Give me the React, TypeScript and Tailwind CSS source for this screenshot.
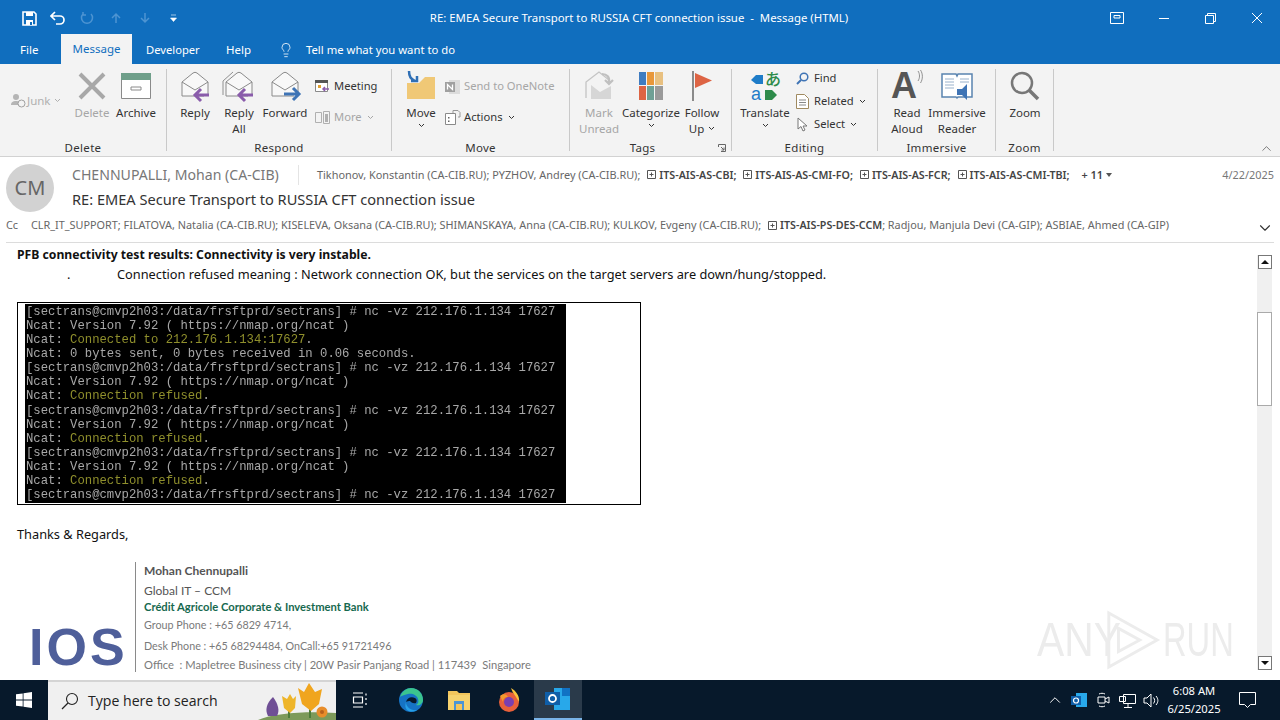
import React from "react";
import { ChevronDown, ChevronUp, Lightbulb } from "lucide-react";

function Caret({ className = "" }: { className?: string }) {
  return (
    <svg width="7" height="5" viewBox="0 0 7 5" className={className}>
      <path d="M1 1l2.5 2.5L6 1" fill="none" stroke="currentColor" strokeWidth="1" />
    </svg>
  );
}

function Big({ w, icon, lines, dim, caret }: { w: number; icon: React.ReactNode; lines: string[]; dim?: boolean; caret?: "below" | "inline" }) {
  return (
    <div style={{ width: w }} className={`flex flex-col items-center shrink-0 leading-[15.5px] ${dim ? "text-[#a6a6a6]" : "text-[#333]"}`}>
      <div className="h-[38px] flex items-center justify-center">{icon}</div>
      {lines.map((l, i) => (
        <div key={l} className="whitespace-nowrap flex items-center gap-[4px]">
          {l}
          {caret === "inline" && i === lines.length - 1 && <Caret />}
        </div>
      ))}
      {caret === "below" && <Caret className="mt-[2px]" />}
    </div>
  );
}

function Small({ icon, label, dim, caret }: { icon: React.ReactNode; label: string; dim?: boolean; caret?: boolean }) {
  return (
    <div className={`h-[23px] flex items-center gap-[3px] whitespace-nowrap text-[11.2px] ${dim ? "text-[#a6a6a6]" : "text-[#333]"}`}>
      <span className="w-[17px] flex justify-center">{icon}</span>
      {label}
      {caret && <Caret className="ml-[2px]" />}
    </div>
  );
}

function Group({ w, label, pl, children, launcher }: { w: number; label: string; pl: number; children: React.ReactNode; launcher?: boolean }) {
  return (
    <div style={{ width: w }} className="relative flex flex-col h-full shrink-0">
      <div style={{ paddingLeft: pl }} className="flex h-[76px] pt-[3px]">{children}</div>
      <div className={`text-center text-[11.5px] text-[#333] leading-[16px] tracking-[0.3px] ${launcher ? "pr-[16px]" : ""}`}>{label}</div>
      {launcher && (
        <svg width="8" height="8" viewBox="0 0 8 8" className="absolute right-[5px] bottom-[4px] text-[#666]">
          <path d="M.5 3V.5h7v7H3M3 3l3 3M6 3.5V6H3.5" fill="none" stroke="currentColor" />
        </svg>
      )}
    </div>
  );
}

function Sep() {
  return <div className="w-px h-[82px] mt-[5px] bg-[#c9c9c9] shrink-0" />;
}

function Envelope({ arrow, extra }: { arrow: string; extra?: boolean }) {
  const right = arrow === "#3f74b5";
  return (
    <svg width="34" height="34" viewBox="0 0 34 34">
      {extra && <path d="M1 26V12L11 3" fill="none" stroke="#909090" />}
      <path d="M4 27V13L15 4q2-1.500 4 0l11 9v14" fill="#f8f8f8" stroke="#8a8a8a" />
      <path d="M4 13l13 8 13-8" fill="none" stroke="#8a8a8a" />
      <path d="M4 27h22" stroke="#8a8a8a" />
      {right ? (
        <path d="M16 25h14M25 19l6 6-6 6" fill="none" stroke={arrow} strokeWidth="3" />
      ) : (
        <path d="M31 26H17M23 20l-6 6 6 6" fill="none" stroke={arrow} strokeWidth="3" />
      )}
    </svg>
  );
}

const terminal: [string, string, string][] = [
  ["[sectrans@cmvp2h03:/data/frsftprd/sectrans] # nc -vz 212.176.1.134 17627", "", ""],
  ["Ncat: Version 7.92 ( https://nmap.org/ncat )", "", ""],
  ["Ncat: ", "Connected to 212.176.1.134:17627", "."],
  ["Ncat: 0 bytes sent, 0 bytes received in 0.06 seconds.", "", ""],
  ["[sectrans@cmvp2h03:/data/frsftprd/sectrans] # nc -vz 212.176.1.134 17627", "", ""],
  ["Ncat: Version 7.92 ( https://nmap.org/ncat )", "", ""],
  ["Ncat: ", "Connection refused", "."],
  ["[sectrans@cmvp2h03:/data/frsftprd/sectrans] # nc -vz 212.176.1.134 17627", "", ""],
  ["Ncat: Version 7.92 ( https://nmap.org/ncat )", "", ""],
  ["Ncat: ", "Connection refused", "."],
  ["[sectrans@cmvp2h03:/data/frsftprd/sectrans] # nc -vz 212.176.1.134 17627", "", ""],
  ["Ncat: Version 7.92 ( https://nmap.org/ncat )", "", ""],
  ["Ncat: ", "Connection refused", "."],
  ["[sectrans@cmvp2h03:/data/frsftprd/sectrans] # nc -vz 212.176.1.134 17627", "", ""],
];

function Dl({ children }: { children: React.ReactNode }) {
  return (
    <span className="inline-flex items-center ml-[7px]">
      <svg width="9" height="9" viewBox="0 0 9 9" className="mr-[3px]">
        <path d="M.5.5h8v8h-8zM2.500 4.500h4M4.500 2.500v4" fill="none" stroke="#555" />
      </svg>
      <b className="font-semibold text-[#444] text-[10.7px]">{children}</b>
    </span>
  );
}

export default function App() {
  return (
    <div className="w-[1280px] h-[720px] overflow-hidden flex flex-col bg-white font-['Noto_Sans',sans-serif] text-[11.5px] relative">
      {/* title bar */}
      <div className="h-[36px] bg-[#106ebe] flex items-center text-white shrink-0">
        <div className="flex items-center pl-[22px] w-[400px]">
          <svg width="15" height="15" viewBox="0 0 15 15">
            <path d="M1 1h11l2 2v11H1z" fill="none" stroke="#fff" strokeWidth="1.6" />
            <path d="M4 1h7v4H4zM4 9h7v5H4z" fill="#fff" />
            <path d="M8 11h2v3H8z" fill="#106ebe" />
          </svg>
          <svg width="16" height="15" viewBox="0 0 16 15" className="ml-[13px]">
            <path d="M5 1L1 5l4 4M1 5h9a4 4 0 0 1 0 8H6" fill="none" stroke="#fff" strokeWidth="1.7" />
          </svg>
          <svg width="14" height="14" viewBox="0 0 14 14" className="ml-[14px]">
            <path d="M3 3a5.5 5.5 0 1 0 8 0M3 1v3h3" fill="none" stroke="#4d94d2" strokeWidth="1.5" />
          </svg>
          <svg width="12" height="12" viewBox="0 0 12 12" className="ml-[16px]">
            <path d="M6 11V2M2 6l4-4 4 4" fill="none" stroke="#4d94d2" strokeWidth="1.5" />
          </svg>
          <svg width="12" height="12" viewBox="0 0 12 12" className="ml-[17px]">
            <path d="M6 1v9M2 6l4 4 4-4" fill="none" stroke="#4d94d2" strokeWidth="1.5" />
          </svg>
          <svg width="7" height="8" viewBox="0 0 7 8" className="ml-[19px]">
            <path d="M1 1h5M0.5 4h6L3.500 7.500z" fill="#fff" stroke="#fff" strokeWidth="0.6" />
          </svg>
        </div>
        <div className="w-[478px] text-center text-[11.4px] text-white whitespace-nowrap">RE: EMEA Secure Transport to RUSSIA CFT connection issue&nbsp; -&nbsp; Message (HTML)</div>
        <div className="flex-1 flex items-center justify-end">
          <svg width="14" height="12" viewBox="0 0 14 12" className="mr-[35px]">
            <path d="M.5.5h13v11H.5z" fill="none" stroke="#fff" />
            <path d="M4 3.500h6V6H4z" fill="none" stroke="#fff" />
          </svg>
          <svg width="10" height="1" viewBox="0 0 10 1" className="mr-[36px]">
            <path d="M0 .5h10" stroke="#fff" />
          </svg>
          <svg width="11" height="11" viewBox="0 0 11 11" className="mr-[36px]">
            <path d="M.5 2.500h8v8h-8zM2.500 2.500v-2h8v8h-2" fill="none" stroke="#fff" />
          </svg>
          <svg width="10" height="10" viewBox="0 0 10 10" className="mr-[18px]">
            <path d="M0 0l10 10M10 0L0 10" stroke="#fff" />
          </svg>
        </div>
      </div>

      {/* tabs */}
      <div className="h-[28px] bg-[#106ebe] flex items-end text-white shrink-0 relative">
        <div className="w-[61px] h-[28px] pl-[20px] flex items-center">File</div>
        <div className="w-[71px] h-[30px] -mt-[2px] bg-[#f3f3f3] text-[#106ebe] flex items-center justify-center">Message</div>
        <div className="w-[81px] pl-[14px] h-[28px] flex items-center text-[11.2px]">Developer</div>
        <div className="w-[65px] pl-[13px] h-[28px] flex items-center">Help</div>
        <div className="h-[28px] flex items-center gap-[12px]">
          <Lightbulb size={16} strokeWidth={1.2} />
          <span className="text-[11.3px]">Tell me what you want to do</span>
        </div>
      </div>

      {/* ribbon */}
      <div className="h-[93px] bg-[#f3f3f3] border-b border-[#d2d2d2] flex shrink-0 relative">
        <Group w={166} label="Delete" pl={11}>
          <div className="w-[63px] pt-[25px]">
            <div className="flex items-center text-[#b0b0b0]">
              <svg width="15" height="15" viewBox="0 0 15 15">
                <circle cx="5" cy="4" r="3" fill="#b5b5b5" />
                <path d="M0 12c0-3 2-4 5-4s4 1 4 4z" fill="#b5b5b5" />
                <circle cx="10.500" cy="10.500" r="3.500" fill="#f3f3f3" stroke="#a0a0a0" />
              </svg>
              <span className="ml-[1px]">Junk</span>
              <Caret className="ml-[3px]" />
            </div>
          </div>
          <Big w={36} dim lines={["Delete"]} icon={
            <svg width="30" height="30" viewBox="0 0 30 30"><path d="M3 3l24 24M27 3L3 27" stroke="#a8a8a8" strokeWidth="4" /></svg>
          } />
          <Big w={52} lines={["Archive"]} icon={
            <svg width="30" height="26" viewBox="0 0 30 26">
              <path d="M.500 6.500h29v19H.500z" fill="#fff" stroke="#8a8a8a" />
              <path d="M0 0h30v7H0z" fill="#6f9f8a" />
              <path d="M10 14h10v3H10z" fill="none" stroke="#8a8a8a" />
            </svg>
          } />
        </Group>
        <Sep />
        <Group w={224} label="Respond" pl={6}>
          <Big w={44} lines={["Reply"]} icon={<Envelope arrow="#8a5cab" />} />
          <Big w={44} lines={["Reply", "All"]} icon={<Envelope arrow="#8a5cab" extra />} />
          <Big w={48} lines={["Forward"]} icon={<Envelope arrow="#3f74b5" />} />
          <div className="ml-[5px] pt-[8px] flex flex-col gap-[8px]">
            <Small label="Meeting" icon={
              <svg width="15" height="15" viewBox="0 0 15 15">
                <path d="M.500 2.500h12v10H.500z" fill="#fff" stroke="#8a8a8a" />
                <path d="M0 1h13v3H0z" fill="#555" />
                <path d="M3 6h3v3H3z" fill="#e0a030" />
                <path d="M14 10H8M10 8l-2 2 2 2" fill="none" stroke="#8a5cab" strokeWidth="1.500" />
              </svg>
            } />
            <Small dim caret label="More" icon={
              <svg width="16" height="14" viewBox="0 0 16 14">
                <path d="M.500 1.500h6v10h-6zM8.500.500h6v12h-6z" fill="none" stroke="#b0b0b0" />
                <path d="M10 3h3v8h-3z" fill="#b0b0b0" />
              </svg>
            } />
          </div>
        </Group>
        <Sep />
        <Group w={177} label="Move" pl={6}>
          <Big w={46} caret="below" lines={["Move"]} icon={
            <svg width="32" height="30" viewBox="0 0 32 30">
              <path d="M2 28V12h12l6-6h10v22z" fill="#f0c876" />
              <path d="M4 0c0 6 2 8 6 10M6 10h6V5" fill="none" stroke="#2f6fb5" strokeWidth="2.500" />
            </svg>
          } />
          <div className="ml-[0px] pt-[8px] flex flex-col gap-[8px]">
            <Small dim label="Send to OneNote" icon={
              <svg width="16" height="16" viewBox="0 0 16 16">
                <path d="M4 1h11v14H4z" fill="#dcdcdc" />
                <path d="M0 3h10v10H0z" fill="#a0a0a0" />
                <path d="M2.500 10.500v-5l5 5v-5" fill="none" stroke="#fff" strokeWidth="1.300" />
              </svg>
            } />
            <Small caret label="Actions" icon={
              <svg width="16" height="15" viewBox="0 0 16 15">
                <path d="M.500 3.500h10v11h-10z" fill="#fff" stroke="#8a8a8a" />
                <path d="M3 7h1.500v1.500H3zM3 10.500h1.500V12H3z" fill="#666" />
                <path d="M8 3V.5h5l2 2V7h-2" fill="none" stroke="#999" />
              </svg>
            } />
          </div>
        </Group>
        <Sep />
        <Group w={161} label="Tags" pl={4} launcher>
          <Big w={50} dim lines={["Mark", "Unread"]} icon={
            <svg width="30" height="30" viewBox="0 0 30 30">
              <path d="M2 27V11L15 1l10 8" fill="none" stroke="#c4c4c4" strokeWidth="1.300" />
              <path d="M7 14l9 7 11-6v13H7z" fill="#d6d6d6" />
              <path d="M18 3c5 0 8 3 7 9M21 9l4 4 4-4" fill="none" stroke="#c0c0c0" strokeWidth="2.200" />
            </svg>
          } />
          <Big w={54} caret="below" lines={["Categorize"]} icon={
            <svg width="24" height="28" viewBox="0 0 24 28">
              <path d="M0 0h7v13H0z" fill="#3f7cc0" />
              <path d="M8 0h7v13H8z" fill="#e8973a" />
              <path d="M16 0h8v13h-8z" fill="#e8c080" />
              <path d="M0 14h7v14H0z" fill="#dd6444" />
              <path d="M8 14h7v14H8z" fill="#6fa095" />
              <path d="M16 14h8v14h-8z" fill="#9a9a9a" />
            </svg>
          } />
          <Big w={48} caret="inline" lines={["Follow", "Up"]} icon={
            <svg width="22" height="30" viewBox="0 0 22 30">
              <path d="M2 0v30" stroke="#8a8a8a" strokeWidth="2" />
              <path d="M4 2l17 7.500L4 17z" fill="#dd6444" />
            </svg>
          } />
        </Group>
        <Sep />
        <Group w={145} label="Editing" pl={9}>
          <Big w={48} caret="below" lines={["Translate"]} icon={
            <div className="w-[28px] h-[30px] leading-[15px] text-[16px] grid grid-cols-2 font-['Noto_Sans_CJK_JP',sans-serif]">
              <svg width="12" height="12" viewBox="0 0 12 12" className="mt-[3px]"><path d="M12 1v9H5L0 6l5-5z" fill="#1e7cc8" /></svg>
              <span className="text-[#2e8b4a] font-medium">あ</span>
              <span className="text-[#1e7cc8] font-['Liberation_Sans',sans-serif] text-[18px] leading-[14px]">a</span>
              <svg width="12" height="12" viewBox="0 0 12 12" className="mt-[2px]"><path d="M0 1h7l5 5-5 5H0z" fill="#2e8b4a" /></svg>
            </div>
          } />
          <div className="ml-[5px]">
            <Small label="Find" icon={
              <svg width="13" height="13" viewBox="0 0 13 13"><circle cx="8" cy="5" r="3.800" fill="none" stroke="#3f74b5" strokeWidth="1.500" /><path d="M5 8l-4 4" stroke="#3f74b5" strokeWidth="2" /></svg>
            } />
            <Small caret label="Related" icon={
              <svg width="13" height="15" viewBox="0 0 13 15"><path d="M.500.500h8l4 4v10H.500z" fill="#fff" stroke="#a08a60" /><path d="M3 6h7M3 8.500h7M3 11h7" stroke="#888" /></svg>
            } />
            <Small caret label="Select" icon={
              <svg width="11" height="15" viewBox="0 0 11 15"><path d="M1 1v11l3-2.500L6 14l2-1-2-4h4z" fill="#fff" stroke="#777" /></svg>
            } />
          </div>
        </Group>
        <Sep />
        <Group w={117} label="Immersive" pl={7}>
          <Big w={44} lines={["Read", "Aloud"]} icon={
            <div className="flex items-start">
              <span className="font-['Liberation_Sans',sans-serif] font-bold text-[#555] text-[36px] leading-[32px]">A</span>
              <svg width="6" height="13" viewBox="0 0 6 13"><path d="M1 1c2 3 2 7 0 10M3.500 0c2.500 4 2.500 9 0 13" fill="none" stroke="#777" strokeWidth=".8" /></svg>
            </div>
          } />
          <Big w={56} lines={["Immersive", "Reader"]} icon={
            <svg width="32" height="30" viewBox="0 0 32 30">
              <path d="M1 3h14l1 2 1-2h14v23H17l-1 1-1-1H1z" fill="#fff" stroke="#5a84b0" strokeWidth="1.500" />
              <path d="M4 8h9M4 11h9M4 14h9M4 17h9M19 8h9M19 11h9" stroke="#9ab2cc" />
              <path d="M16 18h5l5-5v16l-5-5h-5z" fill="#3f74b5" />
            </svg>
          } />
        </Group>
        <Sep />
        <Group w={57} label="Zoom" pl={8}>
          <Big w={42} lines={["Zoom"]} icon={
            <svg width="30" height="30" viewBox="0 0 30 30"><circle cx="12" cy="12" r="10" fill="none" stroke="#777" strokeWidth="2.500" /><path d="M19 19l9 9" stroke="#777" strokeWidth="3.500" /></svg>
          } />
        </Group>
        <Sep />
        <ChevronUp size={15} strokeWidth={1} className="absolute right-[6px] bottom-[0px] text-[#333]" />
      </div>

      {/* message header */}
      <div className="h-[86px] mx-[6px] border-b border-[#dcdcdc] shrink-0 flex relative">
        <div className="w-[48px] h-[48px] mt-[7px] rounded-full bg-[#d2d2d2] text-[#666] text-[20px] flex items-center justify-center shrink-0">CM</div>
        <div className="flex-1 pl-[18px] min-w-0">
          <div className="h-[36px] flex items-center text-[#777]">
            <span className="text-[14.1px] w-[226px] whitespace-nowrap">CHENNUPALLI, Mohan (CA-CIB)</span>
            <span className="w-px h-[20px] bg-[#e4e4e4] mr-[18px]" />
            <span className="text-[10.9px] text-[#666] whitespace-nowrap flex-1 flex items-center">
              Tikhonov, Konstantin (CA-CIB.RU); PYZHOV, Andrey (CA-CIB.RU);
              <Dl>ITS-AIS-AS-CBI;</Dl>
              <Dl>ITS-AIS-AS-CMI-FO;</Dl>
              <Dl>ITS-AIS-AS-FCR;</Dl>
              <Dl>ITS-AIS-AS-CMI-TBI;</Dl>
              <b className="font-semibold text-[#444] ml-[12px]">+ 11</b>
              <svg width="6" height="4" viewBox="0 0 6 4" className="ml-[3px]"><path d="M0 0h6L3 4z" fill="#555" /></svg>
            </span>
            <span className="text-[10.9px] text-[#777]">4/22/2025</span>
          </div>
          <div className="h-[24px] -mt-[5px] flex items-center text-[14.6px] text-[#333] whitespace-nowrap">RE: EMEA Secure Transport to RUSSIA CFT connection issue</div>
        </div>
        <div className="absolute left-0 right-0 top-[60px] h-[16px] flex items-center text-[10.85px] text-[#666] whitespace-nowrap">
          <span className="w-[25px]">Cc</span>
          <span>CLR_IT_SUPPORT; FILATOVA, Natalia (CA-CIB.RU); KISELEVA, Oksana (CA-CIB.RU); SHIMANSKAYA, Anna (CA-CIB.RU); KULKOV, Evgeny (CA-CIB.RU);</span>
          <Dl>ITS-AIS-PS-DES-CCM</Dl>
          <span>; Radjou, Manjula Devi (CA-GIP); ASBIAE, Ahmed (CA-GIP)</span>
          <ChevronDown size={18} strokeWidth={1.500} className="absolute right-0 top-[2px] text-[#333]" />
        </div>
      </div>

      {/* body + scrollbar */}
      <div className="flex-1 min-h-0 flex relative">
        <div className="flex-1 min-w-0 pl-[17px] overflow-hidden text-[#111]">
          <div className="h-[15px] mt-[6px] overflow-hidden flex items-end">
            <div className="font-bold text-[12.2px] leading-[18px] whitespace-nowrap">PFB connectivity test results: Connectivity is very instable.</div>
          </div>
          <div className="flex h-[19px] mt-[1px] items-center text-[12.77px] whitespace-nowrap">
            <span className="w-[100px] pl-[50px]">.</span>
            <span>Connection refused meaning : Network connection OK, but the services on the target servers are down/hung/stopped.</span>
          </div>
          <div className="w-[624px] h-[203px] mt-[18px] border border-black pt-[1px] pl-[7px]">
            <div className="w-[541px] h-[199px] bg-black pl-[1px] pt-[1px] overflow-hidden font-['Liberation_Mono',monospace] text-[12.26px] leading-[14.08px] text-[#a8a8a8] whitespace-pre">
              <div className="blur-[0.3px]">
                {terminal.map((t, i) => (
                  <div key={i}>{t[0]}<span className="text-[#8f8f2c]">{t[1]}</span>{t[2]}</div>
                ))}
              </div>
            </div>
          </div>
          <div className="mt-[20px] text-[12.77px] leading-[18px]">Thanks &amp; Regards,</div>
          <div className="flex mt-[19px]">
            <div className="w-[118px] h-[110px] flex items-end pl-[12px]">
              <span className="font-['Liberation_Sans',sans-serif] font-bold text-[52px] leading-[50px] text-[#4f5f9a] tracking-[3px]">IOS</span>
            </div>
            <div className="border-l border-[#8a8a8a] pl-[8px] pt-[1px] h-[110px] font-['Lato',sans-serif] whitespace-nowrap">
              <div className="font-bold text-[#555] text-[12px] leading-[16px]">Mohan Chennupalli</div>
              <div className="text-[#555] text-[12px] leading-[16px] mt-[4px]">Global IT – CCM</div>
              <div className="font-bold text-[#17694f] text-[11.2px] leading-[16px]">Crédit Agricole Corporate &amp; Investment Bank</div>
              <div className="text-[#7a7a7a] text-[10.75px] leading-[16px] mt-[2px]">Group Phone : +65 6829 4714,</div>
              <div className="text-[#7a7a7a] text-[10.75px] leading-[16px] mt-[5px]">Desk Phone : +65 68294484, OnCall:+65 91721496</div>
              <div className="text-[#7a7a7a] text-[11.17px] leading-[16px] mt-[3px]">Office&nbsp; : Mapletree Business city | 20W Pasir Panjang Road | 117439&nbsp; Singapore</div>
            </div>
          </div>
        </div>
        <div className="w-[15px] mr-[8px] mt-[12px] mb-[10px] bg-[#f0f0f0] flex flex-col items-center">
          <div className="w-[14px] h-[14px] border border-[#777] bg-white flex items-center justify-center shrink-0">
            <svg width="8" height="4" viewBox="0 0 8 4"><path d="M0 4l4-4 4 4z" fill="#111" /></svg>
          </div>
          <div className="flex-1 w-full pt-[43px]">
            <div className="h-[94px] w-full bg-white border border-[#aaa]" />
          </div>
          <div className="w-[14px] h-[14px] border border-[#777] bg-white flex items-center justify-center shrink-0">
            <svg width="8" height="4" viewBox="0 0 8 4"><path d="M0 0l4 4 4-4z" fill="#111" /></svg>
          </div>
        </div>
        {/* watermark */}
        <div className="absolute left-[1037px] top-[365px] flex items-center text-[#ececec] font-['Liberation_Sans',sans-serif] text-[48px] leading-[50px] pointer-events-none">
          <span className="scale-x-[0.85] origin-left w-[66px]">ANY</span>
          <svg width="60" height="64" viewBox="0 0 62 64">
            <path d="M6 4l50 28-50 28zM16 20l22 12-22 12z" fill="none" stroke="#ececec" strokeWidth="3" />
          </svg>
          <span className="scale-x-[0.68] origin-left">RUN</span>
        </div>
      </div>

      {/* taskbar */}
      <div className="h-[40px] bg-[#07192b] flex items-center text-white shrink-0">
        <div className="w-[48px] flex justify-center">
          <svg width="16" height="16" viewBox="0 0 16 16"><path d="M0 2.300L6.700 1.400v6.200H0zM7.500 1.300L16 0v7.600H7.500zM0 8.400h6.700v6.200L0 13.700zM7.500 8.400H16V16l-8.500-1.300z" fill="#fff" /></svg>
        </div>
        <div className="w-[288px] h-[40px] bg-[#f0f0f0] border-t-[2px] border-[#d4d4d4] flex items-center pl-[13px] text-[#222] relative overflow-hidden">
          <svg width="18" height="18" viewBox="0 0 18 18">
            <circle cx="11" cy="7" r="5.500" fill="none" stroke="#222" strokeWidth="1.100" />
            <path d="M7 11l-6 6" stroke="#222" strokeWidth="1.300" />
          </svg>
          <span className="ml-[9px] font-['Open_Sans',sans-serif] text-[14.1px]">Type here to search</span>
          <svg width="78" height="38" viewBox="0 0 78 38" className="absolute right-0 bottom-0">
            <path d="M0 38c15-7 50-9 78-7v7z" fill="#7d9a5a" />
            <path d="M10 34c-3-6-2-12 5-19 5 7 7 13 4 19z" fill="#6f4f95" />
            <path d="M31 28v8M52 26v10" stroke="#4e7d3a" strokeWidth="2" />
            <path d="M24 14l5 3 3-5 3 5 3-3-1 12-5 5-6-5z" fill="#eeb52a" />
            <path d="M40 6l6 4 5-9 6 9 7-3-3 15-8 7-9-7z" fill="#f0a51e" />
            <circle cx="64" cy="30" r="5.500" fill="#e88d2a" />
            <circle cx="64" cy="30" r="2" fill="#b8611c" />
          </svg>
        </div>
        <div className="w-[48px] flex justify-center">
          <svg width="16" height="16" viewBox="0 0 16 16"><path d="M1 1h10M1 15h10M1.500 5h9v6h-9zM14 1.500v2M14 6v2M14 11v2" fill="none" stroke="#fff" strokeWidth="1.200" /></svg>
        </div>
        <div className="w-[54px] flex justify-center">
          <svg width="24" height="24" viewBox="0 0 24 24">
            <circle cx="12" cy="12" r="12" fill="#1673c4" />
            <path d="M1 9C3 3 8 0 12 0c7 0 12 5 12 12 0 4-4 6-7 5 2-1 3-3 2-6-1-4-6-6-10-5C5 7 2 8 1 9z" fill="#3bc48e" />
            <path d="M7 14c1-4 5-6 9-4 2 1 2 3 1 5-3 1-5-1-6-2-1 0-3 0-4 1z" fill="#07192b" />
            <path d="M7 14c0 5 5 9 11 8-3 2-7 2-10 0-2-2-2-5-1-8z" fill="#26a0e8" />
          </svg>
        </div>
        <div className="w-[42px] flex justify-center">
          <svg width="22" height="20" viewBox="0 0 22 20">
            <path d="M0 1h9l2 2h11v17H0z" fill="#f2c55c" />
            <path d="M0 5h22v15H0z" fill="#f6d26e" />
            <path d="M6 11h10v9H6z" fill="#4a95d6" />
            <path d="M8 14h6v6H8z" fill="#f2c55c" />
          </svg>
        </div>
        <div className="w-[50px] ml-[4px] flex justify-center">
          <svg width="24" height="24" viewBox="0 0 24 24">
            <circle cx="12" cy="14" r="10" fill="#e8603a" />
            <path d="M14 0c5 3 9 8 8 14-3-6-6-8-8-14z" fill="#f9c23c" />
            <circle cx="12" cy="14" r="5" fill="#7a3fb0" />
            <path d="M3 8c3-3 7-2 8 1-3 0-5 2-5 5z" fill="#f29a2e" />
          </svg>
        </div>
        <div className="w-[48px] h-[40px] bg-[#2a3a4a] border-b-[2px] border-[#7ab4e8] flex items-center justify-center">
          <svg width="26" height="24" viewBox="0 0 26 24">
            <path d="M9 1h16v22H9z" fill="#28a8ea" />
            <path d="M17 1h8v8h-8z" fill="#1172c4" />
            <path d="M0 5h15v13H0z" fill="#0f5ea8" />
            <circle cx="7.500" cy="11.500" r="3.500" fill="none" stroke="#fff" strokeWidth="1.800" />
          </svg>
        </div>
        <div className="flex-1 flex items-center justify-end">
          <div className="w-[24px] flex justify-center">
            <ChevronUp size={18} strokeWidth={1.300} />
          </div>
          <div className="w-[24px] flex justify-center">
            <svg width="16" height="16" viewBox="0 0 16 16">
              <path d="M5 1h11v14H5z" fill="#28a8ea" />
              <path d="M0 4h10v9H0z" fill="#0f5ea8" />
              <circle cx="5" cy="8.500" r="2.500" fill="none" stroke="#fff" strokeWidth="1.200" />
            </svg>
          </div>
          <div className="w-[24px] flex justify-center">
            <svg width="13" height="16" viewBox="0 0 13 16">
              <path d="M1 5h7v6H1zM8 7l4-2v6l-4-2M2 2c2-1 4-1 6 0M2 14c2 1 4 1 6 0" fill="none" stroke="#fff" />
            </svg>
          </div>
          <div className="w-[24px] flex justify-center">
            <svg width="17" height="15" viewBox="0 0 17 15">
              <path d="M4.500 1.500h12v9h-12zM.500 3.500h6v5h-6zM9 11v3M5 14.500h8" fill="#07192b" stroke="#fff" />
            </svg>
          </div>
          <div className="w-[24px] flex justify-center">
            <svg width="17" height="15" viewBox="0 0 17 15">
              <path d="M1 5h3l4-4v13l-4-4H1zM10.500 4.500c1.500 2 1.500 4 0 6M13 3c2.500 3 2.500 6 0 9" fill="none" stroke="#fff" />
            </svg>
          </div>
          <div className="w-[62px] text-center text-[11.2px] leading-[18px]">
            <div>6:08 AM</div>
            <div>6/25/2025</div>
          </div>
          <div className="w-[44px] mr-[11px] flex justify-center">
            <svg width="17" height="16" viewBox="0 0 17 16">
              <path d="M.500.500h16v12h-5l-3 3-3-3h-5z" fill="none" stroke="#fff" />
            </svg>
          </div>
        </div>
      </div>
    </div>
  );
}
